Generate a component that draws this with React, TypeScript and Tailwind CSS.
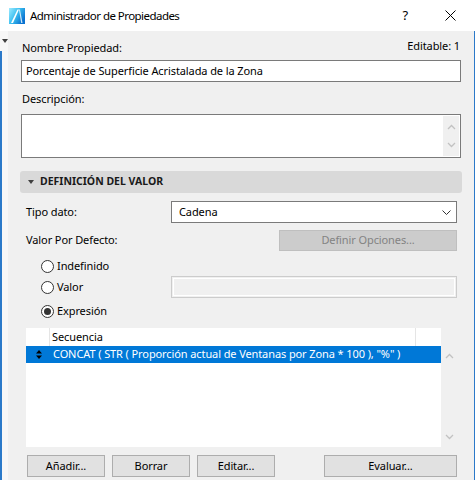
import { ReactNode } from 'react';

const font = { fontFamily: '"Noto Sans", "Open Sans", sans-serif' };

function Radio({ checked, label }: { checked?: boolean; label: string }) {
  return (
    <div className="flex h-full items-center">
      <span className="ml-[15px] flex h-[13px] w-[13px] items-center justify-center rounded-full border border-[#333] bg-white">
        {checked && <span className="h-[7px] w-[7px] rounded-full bg-[#333]" />}
      </span>
      <span className="ml-[3px]">{label}</span>
    </div>
  );
}

function ScrollArrow({ up }: { up?: boolean }) {
  return (
    <svg width="9" height="6" viewBox="0 0 9 6" className="block">
      <path d={up ? 'M1 5 L4.5 1.5 L8 5' : 'M1 1 L4.5 4.5 L8 1'} fill="none" stroke="#c2c2c2" strokeWidth="1.3" />
    </svg>
  );
}

function Btn({ children, className }: { children: ReactNode; className: string }) {
  return (
    <button className={`flex h-[22px] items-center justify-center border border-[#adadad] bg-[#e1e1e1] text-black ${className}`}>
      {children}
    </button>
  );
}

export default function App() {
  return (
    <div
      className="flex h-[480px] w-[475px] flex-col overflow-hidden bg-white text-[11px] tracking-[-0.1px] text-black"
      style={font}
    >
      {/* barra de título */}
      <div className="flex h-[31px] shrink-0 items-center bg-white">
        <svg width="16" height="16" viewBox="0 0 16 16" className="ml-[9px]">
          <defs>
            <linearGradient id="ac" x1="0" y1="0" x2="1" y2="0.6">
              <stop offset="0" stopColor="#9eeaff" />
              <stop offset="0.5" stopColor="#3cc0f0" />
              <stop offset="1" stopColor="#0a72d0" />
            </linearGradient>
          </defs>
          <rect x="0" y="0" width="16" height="16" fill="url(#ac)" />
          <path d="M2 15 L8.5 1.5 L10 1.5 L4 15 Z" fill="#ffffff" />
          <path d="M10 1.5 L11 1.5 L13.5 15 L12.2 15 Z" fill="#ffffff" opacity="0.8" />
        </svg>
        <span className="ml-[5px] text-[11.5px] tracking-[-0.55px]">Administrador de Propiedades</span>
        <span className="ml-auto mr-[37px] text-[13px]">?</span>
        <svg width="11" height="11" viewBox="0 0 11 11" className="mr-[19px]">
          <path d="M0.5 0.5 L10.5 10.5 M10.5 0.5 L0.5 10.5" stroke="#000" strokeWidth="1" />
        </svg>
      </div>

      <div className="flex flex-1">
        {/* tira izquierda */}
        <div className="flex w-[8px] shrink-0 flex-col bg-[#f7f7f7]">
          <svg width="6" height="4" viewBox="0 0 6 4" className="ml-[2px] mt-[8px]">
            <path d="M0 0 L6 0 L3 4 Z" fill="#404040" />
          </svg>
          <div className="mt-[8px] w-[2px] flex-1 bg-[#2b79c9]" />
        </div>

        <div className="flex flex-1 flex-col border-r border-[#2b79c9] bg-[#f0f0f0] pl-[13px] pr-[13px] pt-[8px]">
          <div className="flex h-[18px] items-center justify-between pl-[1px]">
            <span>Nombre Propiedad:</span>
            <span className="-mt-[4px] mr-[1px]">Editable: 1</span>
          </div>
          <div className="mt-[3px] flex h-[22px] items-center border border-[#7a7a7a] bg-white pl-[4px]">
            Porcentaje de Superficie Acristalada de la Zona
          </div>
          <div className="mt-[8px] flex h-[18px] items-center pl-[1px]">Descripción:</div>
          <div className="mt-[6px] flex h-[44px] justify-end border border-[#7a7a7a] bg-white">
            <div className="my-[1px] mr-[1px] flex w-[16px] flex-col items-center justify-between bg-[#f0f0f0] py-[8px]">
              <ScrollArrow up />
              <ScrollArrow />
            </div>
          </div>

          <div className="-mx-[1px] mt-[13px] flex h-[22px] items-center rounded-[3px] bg-[#d9d9d9] pl-[8px]">
            <svg width="6" height="4" viewBox="0 0 6 4">
              <path d="M0 0 L6 0 L3 4 Z" fill="#404040" />
            </svg>
            <span className="ml-[6px] text-[10.5px] font-bold tracking-normal text-[#1a1a1a]">DEFINICIÓN DEL VALOR</span>
          </div>

          <div className="flex flex-col pl-[5px] pr-[4px]">
            <div className="mt-[8px] flex h-[22px] items-center">
              <span className="w-[145px]">Tipo dato:</span>
              <div className="flex h-full flex-1 items-center justify-between border border-[#7a7a7a] bg-white pl-[7px] pr-[5px]">
                <span>Cadena</span>
                <svg width="9" height="5" viewBox="0 0 9 5">
                  <path d="M0.5 0.5 L4.5 4.5 L8.5 0.5" fill="none" stroke="#333" strokeWidth="1" />
                </svg>
              </div>
            </div>

            <div className="mt-[7px] flex h-[21px] items-center">
              <span className="flex-1">Valor Por Defecto:</span>
              <div className="flex h-full w-[178px] items-center justify-center border border-[#bfbfbf] bg-[#cccccc] text-[#838383]">
                Definir Opciones...
              </div>
            </div>

            <div className="mt-[7px] h-[16px]">
              <Radio label="Indefinido" />
            </div>
            <div className="mt-[2px] flex h-[22px] items-center">
              <div className="w-[145px]">
                <Radio label="Valor" />
              </div>
              <div className="h-full flex-1 border border-[#cccccc] bg-[#f0f0f0] p-[1px]">
                <div className="h-full w-full border border-white" />
              </div>
            </div>
            <div className="mt-[5px] h-[16px]">
              <Radio checked label="Expresión" />
            </div>

            {/* tabla */}
            <div className="mt-[9px] flex h-[119px]">
              <div className="flex flex-1 flex-col bg-white">
                <div className="flex h-[18px]">
                  <div className="w-[24px] border-r border-[#e5e5e5]" />
                  <div className="flex flex-1 items-center pl-[2px]">Secuencia</div>
                  <div className="w-[26px] border-l border-[#e5e5e5]" />
                </div>
                <div className="flex h-[17px] items-center bg-[#0078d7] text-white">
                  <div className="flex w-[25px] justify-center pl-[1px]">
                    <svg width="6" height="9" viewBox="0 0 6 9">
                      <path d="M0 3.5 L3 0 L6 3.5 Z M0 5.5 L6 5.5 L3 9 Z" fill="#000" />
                    </svg>
                  </div>
                  <span className="pl-[2px]">CONCAT ( STR ( Proporción actual de Ventanas por Zona * 100 ), "%" )</span>
                </div>
              </div>
              <div className="flex w-[16px] flex-col items-center justify-between pb-[7px] pt-[25px]">
                <ScrollArrow up />
                <ScrollArrow />
              </div>
            </div>

            <div className="mt-[8px] flex h-[22px]">
              <Btn className="ml-[1px] w-[78px]">Añadir...</Btn>
              <Btn className="ml-[7px] w-[78px]">Borrar</Btn>
              <Btn className="ml-[7px] w-[78px]">Editar...</Btn>
              <Btn className="ml-auto w-[133px]">Evaluar...</Btn>
            </div>
          </div>
        </div>
      </div>
    </div>
  );
}
